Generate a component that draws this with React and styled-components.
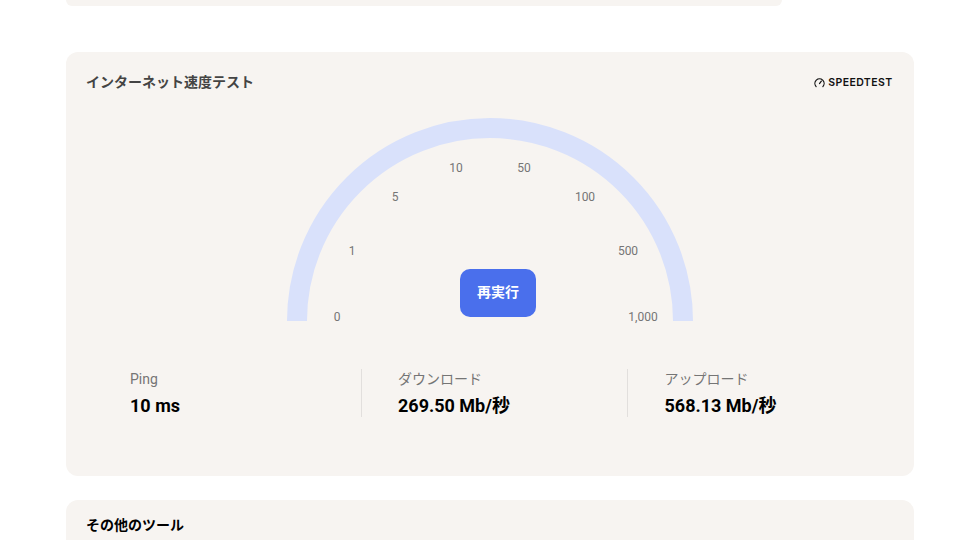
import React from 'react'
import styled, { createGlobalStyle } from 'styled-components'

const GlobalStyle = createGlobalStyle`
  html, body {
    margin: 0;
    padding: 0;
    height: 540px;
    overflow: hidden;
    background: #fff;
    font-family: Roboto, 'Noto Sans CJK JP', sans-serif;
  }
`

const Page = styled.main`
  height: 540px;
  overflow: hidden;
  padding: 0 46px 0 66px;
`

const TopCard = styled.div`
  width: 716px;
  height: 6px;
  background: #f7f4f1;
  border-radius: 0 0 12px 12px;
  margin-bottom: 46px;
`

const Card = styled.section`
  background: #f7f4f1;
  border-radius: 12px;
  width: 848px;
  box-sizing: border-box;
`

const SpeedCard = styled(Card)`
  height: 424px;
  padding: 20px 20px 0;
  margin-bottom: 24px;
`

const ToolsCard = styled(Card)`
  height: 100px;
  padding: 15px 20px 0;
`

const Header = styled.header`
  display: flex;
  justify-content: space-between;
  align-items: center;
  height: 20px;
`

const Title = styled.h2`
  margin: 0;
  font-size: 14px;
  line-height: 20px;
  font-weight: 700;
  color: ${props => props.color || '#000'};
`

const Logo = styled.div`
  display: flex;
  align-items: center;
  gap: 3px;
  margin-right: 1.5px;
  color: #111;
  font-family: Inter, sans-serif;
  font-size: 10.5px;
  font-weight: 600;
  letter-spacing: 0.4px;
`

const Gauge = styled.div`
  position: relative;
  width: 406px;
  height: 203px;
  margin: 26px auto 0;
`

const Arc = styled.svg`
  display: block;
`

const Tick = styled.span`
  position: absolute;
  transform: translate(-50%, -50%);
  font-size: 12px;
  line-height: 14px;
  color: #757575;
`

const RunButton = styled.button`
  position: absolute;
  left: 173px;
  top: 151px;
  width: 76px;
  height: 48px;
  padding: 0 0 4px;
  border: 0;
  border-radius: 10px;
  background: #4a6fec;
  color: #fff;
  font-family: inherit;
  font-size: 14px;
  font-weight: 700;
`

const Stats = styled.div`
  display: grid;
  grid-template-columns: 268px 266.5px 267px;
  margin: 48px 0 0 7.5px;
`

const Stat = styled.div`
  height: 48px;
  box-sizing: border-box;
  padding-left: 36.5px;
  border-right: ${props => (props.last ? '0' : '1px solid #e2dfdd')};
`

const StatLabel = styled.div`
  font-size: 14px;
  line-height: 20px;
  color: #757575;
`

const StatValue = styled.div`
  margin-top: 5px;
  font-size: 18px;
  line-height: 24px;
  font-weight: 700;
  color: #000;
`

const ticks = [
  { label: '0', x: 50, y: 199 },
  { label: '1', x: 65, y: 133 },
  { label: '5', x: 108, y: 79 },
  { label: '10', x: 169, y: 50 },
  { label: '50', x: 237, y: 50 },
  { label: '100', x: 298, y: 79 },
  { label: '500', x: 341, y: 133 },
  { label: '1,000', x: 356, y: 199 },
]

const stats = [
  { label: 'Ping', value: '10 ms' },
  { label: 'ダウンロード', value: '269.50 Mb/秒' },
  { label: 'アップロード', value: '568.13 Mb/秒' },
]

const App = () => (
  <Page>
    <GlobalStyle />
    <TopCard />

    <SpeedCard>
      <Header>
        <Title color="#444">インターネット速度テスト</Title>
        <Logo>
          <svg width="11" height="11" viewBox="0 0 12 12" fill="none" stroke="#111" strokeWidth="1.3" strokeLinecap="round">
            <path d="M2.3 10.4a5 5 0 1 1 7.4 0" />
            <path d="M6 7.2 8 4.4" />
          </svg>
          SPEEDTEST
        </Logo>
      </Header>

      <Gauge>
        <Arc width="406" height="203" viewBox="0 0 406 203">
          <path d="M10 203a193 193 0 0 1 386 0" fill="none" stroke="#d9e1fb" strokeWidth="20" />
        </Arc>
        {ticks.map(t => (
          <Tick key={t.label} style={{ left: t.x, top: t.y }}>{t.label}</Tick>
        ))}
        <RunButton>再実行</RunButton>
      </Gauge>

      <Stats>
        {stats.map((s, i) => (
          <Stat key={s.label} last={i === stats.length - 1}>
            <StatLabel>{s.label}</StatLabel>
            <StatValue>{s.value}</StatValue>
          </Stat>
        ))}
      </Stats>
    </SpeedCard>

    <ToolsCard>
      <Title>その他のツール</Title>
    </ToolsCard>
  </Page>
)

export default App
